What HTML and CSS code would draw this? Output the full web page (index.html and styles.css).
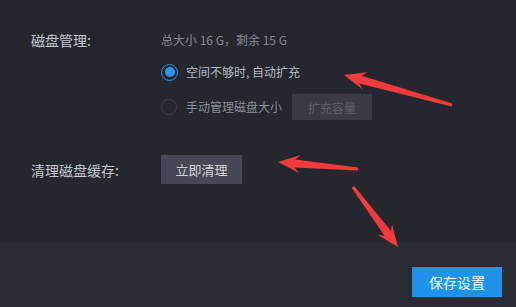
FILE: index.html
```html
<!DOCTYPE html>
<html lang="zh-CN">
<head>
<meta charset="utf-8">
<title>磁盘设置</title>
<link rel="stylesheet" href="styles.css">
</head>
<body>
<div class="page">
  <main class="main">
    <section class="row row-disk">
      <div class="label">磁盘管理:</div>
      <div class="options">
        <div class="info">总大小 16 G，剩余 15 G</div>
        <div class="option">
          <span class="radio radio-on"><span class="dot"></span></span>
          <span class="opt-text">空间不够时, 自动扩充</span>
        </div>
        <div class="option">
          <span class="radio"></span>
          <span class="opt-text opt-dim">手动管理磁盘大小</span>
          <button class="btn btn-disabled">扩充容量</button>
        </div>
      </div>
    </section>
    <section class="row row-clean">
      <div class="label">清理磁盘缓存:</div>
      <button class="btn btn-gray">立即清理</button>
    </section>
  </main>
  <footer class="footer">
    <button class="btn btn-primary">保存设置</button>
  </footer>
  <svg class="arrows" width="516" height="307" viewBox="0 0 516 307">
    <polygon fill="#f23b3b" points="344,75 362.8,89.6 359.3,83.4 451.6,106.4 452.4,103.6 361.4,75.7 367.6,72.2"/>
    <polygon fill="#f23b3b" points="278,162 299.1,172.9 294.6,167.5 357.9,170.5 358.1,167.5 295.3,159.5 300.7,154.9"/>
    <polygon fill="#f23b3b" points="398,247 392,224 391,231 354.2,186.1 351.8,187.9 384.6,235.8 377.6,234.8"/>
  </svg>
</div>
</body>
</html>
```

FILE: styles.css
```css
html, body {
  margin: 0;
  padding: 0;
}
body {
  background: #25272e;
  font-family: "Noto Sans CJK SC", "Noto Sans", sans-serif;
  color: #c4c6cc;
}
.page {
  position: relative;
  width: 516px;
  height: 307px;
  overflow: hidden;
}
.main {
  height: 242px;
  box-sizing: border-box;
  padding: 30px 0 0 31px;
}
.row {
  display: flex;
  align-items: flex-start;
}
.label {
  width: 130px;
  flex: none;
  font-size: 14px;
  line-height: 20px;
  color: #c6c8ce;
}
.options {
  display: flex;
  flex-direction: column;
  gap: 10px;
}
.info {
  font-size: 12px;
  line-height: 20px;
  color: #878a92;
}
.option {
  display: flex;
  align-items: center;
  min-height: 24px;
}
.radio {
  width: 16px;
  height: 16px;
  box-sizing: border-box;
  border-radius: 50%;
  border: 1px solid #3b3e46;
  display: flex;
  align-items: center;
  justify-content: center;
  margin-right: 9px;
}
.radio-on {
  width: 17px;
  height: 17px;
  border: 1.5px solid #2c8fe6;
  margin-right: 8px;
}
.dot {
  width: 10px;
  height: 10px;
  border-radius: 50%;
  background: #2f95ee;
}
.opt-text {
  font-size: 12px;
  line-height: 20px;
  color: #b9bbc1;
}
.opt-dim {
  color: #8c8f96;
}
.btn {
  border: none;
  padding: 0;
  font-family: "Noto Sans CJK SC", "Noto Sans", sans-serif;
  cursor: pointer;
}
.btn-disabled {
  margin-left: 10px;
  width: 80px;
  height: 26px;
  background: #393c44;
  color: #5f626a;
  font-size: 12px;
}
.row-clean {
  margin-top: 35px;
  align-items: center;
}
.btn-gray {
  width: 81px;
  height: 29px;
  background: #464955;
  color: #d2d4d9;
  font-size: 13px;
}
.footer {
  height: 65px;
  background: #2a2c33;
  display: flex;
  justify-content: flex-end;
  align-items: flex-start;
  box-sizing: border-box;
  padding: 25px 14px 0 0;
}
.btn-primary {
  width: 90px;
  height: 30px;
  background: #1f92ea;
  color: #ffffff;
  font-size: 14px;
}
.arrows {
  position: absolute;
  left: 0;
  top: 0;
  pointer-events: none;
}
```
